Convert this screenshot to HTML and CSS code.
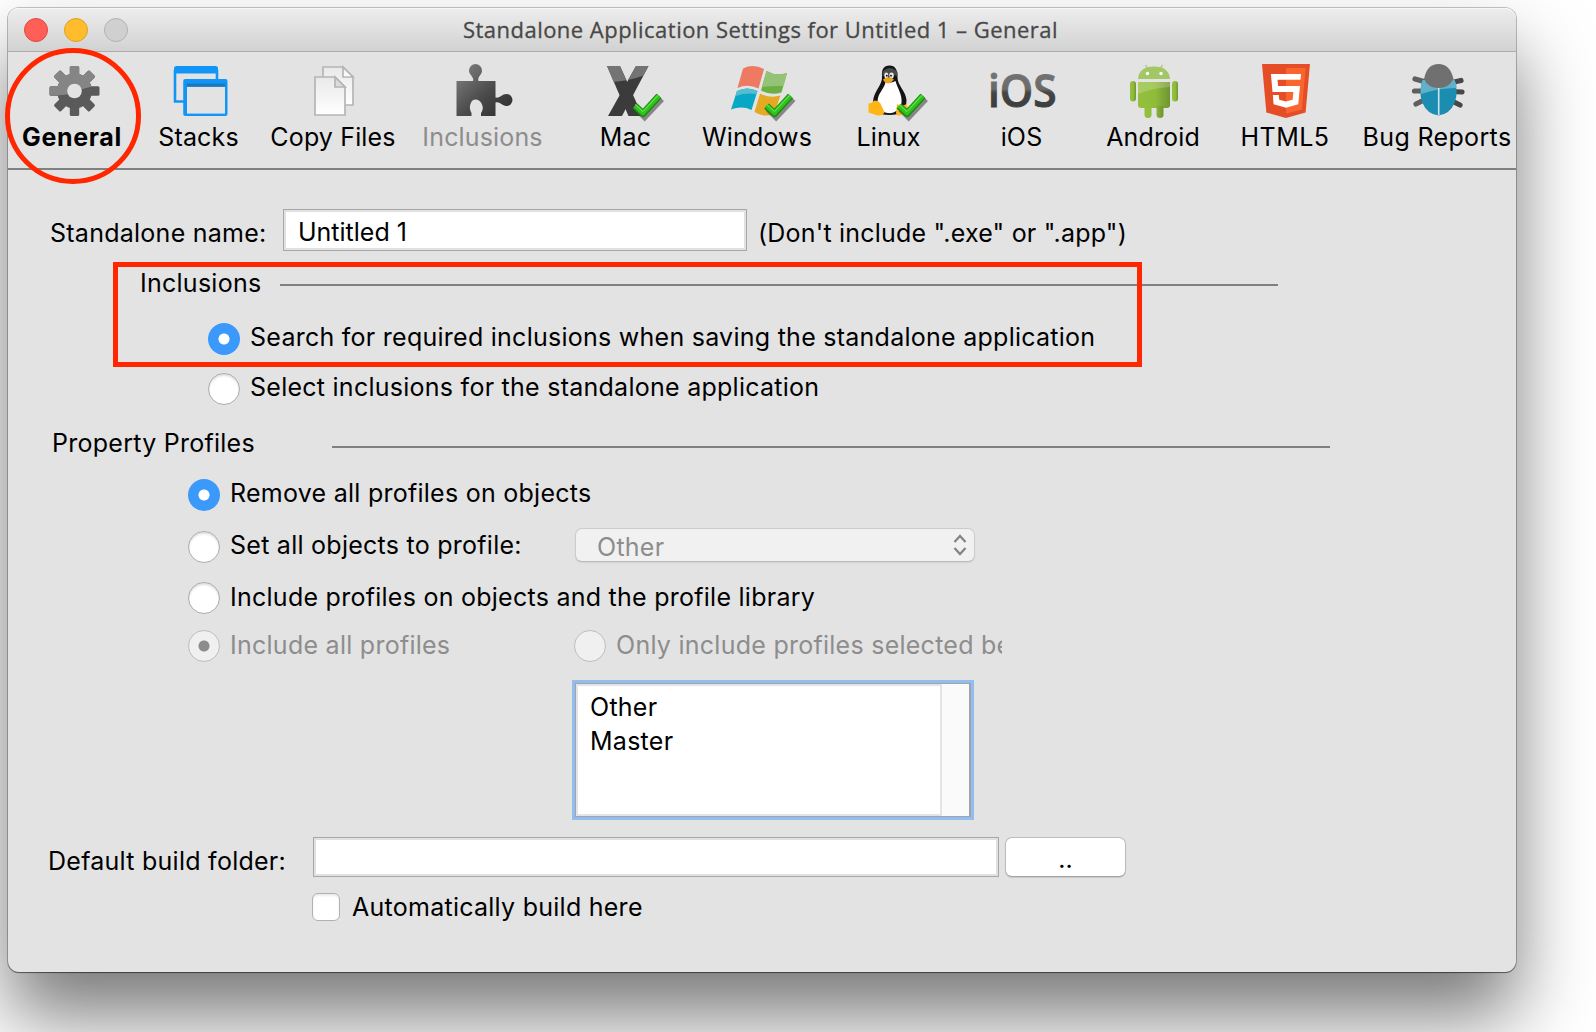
FILE: index.html
```html
<!DOCTYPE html>
<html lang="en">
<head>
<meta charset="utf-8">
<title>Standalone Application Settings</title>
<link rel="stylesheet" href="styles.css">
</head>
<body>
<svg class="defs" width="0" height="0" aria-hidden="true">
  <defs>
    <linearGradient id="puzzle" x1="0" y1="0" x2="1" y2="1"><stop offset="0" stop-color="#858585"/><stop offset=".55" stop-color="#4a4a4a"/><stop offset="1" stop-color="#2c2c2c"/></linearGradient>
    <linearGradient id="split" x1="0" y1="0" x2="0" y2="1"><stop offset="0" stop-color="#7d7d7d"/><stop offset=".5" stop-color="#6a6a6a"/><stop offset=".56" stop-color="#454545"/><stop offset="1" stop-color="#363636"/></linearGradient>
    <linearGradient id="paper" x1="0" y1="0" x2="0" y2="1"><stop offset="0" stop-color="#e9e9e9"/><stop offset="1" stop-color="#ffffff"/></linearGradient>
    <linearGradient id="droid" x1="0" y1="0" x2="1" y2="0"><stop offset="0" stop-color="#94c13c"/><stop offset=".55" stop-color="#8fbb3a"/><stop offset="1" stop-color="#6f9430"/></linearGradient>
    <g id="check">
      <path d="M2 14 L10 22 L27 4" fill="none" stroke="#3a3a3a" stroke-opacity=".55" stroke-width="6.5" transform="translate(1.6 1.8)"/>
      <path d="M2 13 L10 20.5 L26 3" fill="none" stroke="#1c8a10" stroke-width="7" stroke-linejoin="round"/>
      <path d="M2 12.6 L10 20 L26 2.6" fill="none" stroke="#2fc41c" stroke-width="4.6" stroke-linejoin="round"/>
      <path d="M2 11.4 L10 18.6 L25 2.4" fill="none" stroke="#7de36c" stroke-width="1"/>
    </g>
  </defs>
</svg>
<main class="window">
  <header class="titlebar">
    <div class="lights"><i class="light close"></i><i class="light minimise"></i><i class="light zoom"></i></div>
    <h1 class="title">Standalone Application Settings for Untitled 1 – General</h1>
  </header>

  <nav class="toolbar">
    <a class="tool tool-general active">
      <svg viewBox="36 60 72 60"><g fill="#5a5a5a"><circle cx="74.5" cy="91" r="17.5"/><g id="teeth"><rect x="69.8" y="66" width="9.4" height="50" rx="1.5"/><rect x="69.8" y="66" width="9.4" height="50" rx="1.5" transform="rotate(45 74.5 91)"/><rect x="69.8" y="66" width="9.4" height="50" rx="1.5" transform="rotate(90 74.5 91)"/><rect x="69.8" y="66" width="9.4" height="50" rx="1.5" transform="rotate(135 74.5 91)"/></g></g>
      <clipPath id="gear-top"><path d="M48 64H102V86Q90 86 82 89Q66 97 48 95Z"/></clipPath>
      <g clip-path="url(#gear-top)"><g fill="#858585"><circle cx="74.5" cy="91" r="17.5"/><use href="#teeth"/></g></g>
      <circle cx="74.5" cy="91" r="7.3" fill="#e3e3e3"/></svg>
      <span>General</span></a>
    <a class="tool tool-stacks">
      <svg viewBox="163.500 60 72 60"><path d="M175.5 70V101.500H186M217.500 70V80" fill="none" stroke="#1296f5" stroke-width="2.6"/><path d="M174.500 73.500V68.500Q174.500 66 177 66H216Q218.500 66 218.500 68.500V73.500Z" fill="#1296f5"/><rect x="183.700" y="79" width="44.300" height="37" rx="2" fill="#1296f5"/><rect x="187.500" y="86.800" width="38" height="26.800" fill="#e3e3e3"/><rect x="187" y="83.600" width="39" height="3" fill="#1a78bd"/></svg>
      <span>Stacks</span></a>
    <a class="tool tool-copy">
      <svg viewBox="297 60 72 60"><g fill="url(#paper)" stroke="#b5b5b5" stroke-width="1.7"><path d="M323 67H343L353 77V105H323Z"/><path d="M343 67V77H353Z"/><path d="M315 77H335L345 87V115H315Z"/><path d="M335 77V87H345Z" fill="#dcdcdc"/></g></svg>
      <span>Copy Files</span></a>
    <a class="tool tool-inclusions disabled">
      <svg viewBox="446.500 60 72 60"><path fill="url(#puzzle)" d="M456 81H472.500C474 77 468.500 75 468.500 70.500A6.500 6.500 0 0 1 481.500 70.500C481.500 75 476.500 77 478 81H495V97.500C500 98.500 501 94 506 94A6 6 0 0 1 506 106C501 106 500 101.500 495 102.500V116H480.500V113C482 111 483 108 481.500 104.500C479 98 471.500 98 470 104C468.500 108 470 111 471 113V116H456Z"/></svg>
      <span>Inclusions</span></a>
    <a class="tool tool-mac">
      <svg viewBox="589.500 60 72 60"><clipPath id="x-top"><path d="M600 60H655V68Q642 81 600 83Z"/></clipPath><g fill="#3b3b3b"><path id="bar-a" d="M606.500 66H619.500L642 116H628Z"/><path id="bar-b" d="M635.500 66H648L621.500 116H607.500Z"/></g><g clip-path="url(#x-top)" fill="#747474"><use href="#bar-a"/><use href="#bar-b"/></g><use href="#check" x="632.500" y="93"/></svg>
      <span>Mac</span></a>
    <a class="tool tool-windows">
      <svg viewBox="721 60 72 60"><path d="M743 68.500Q753 63.500 764 69L758.500 88.500Q748 83.500 737.500 88Z" fill="#ee7a61"/><path d="M766.500 71Q776 76.500 787 73L781.500 92.500Q771 96 761 90.500Z" fill="#6cb043"/><path d="M766.500 71Q776 76.500 787 73L783.500 86Q772 85.500 762 87Z" fill="#94c377"/><path d="M737 91Q747 86 757.500 91L751.500 110Q742 105.500 731 109.500Z" fill="#08a7c6"/><path d="M737 91Q747 86 757.500 91L756.500 94Q746 92.500 735.500 96Z" fill="#55bdd1"/><path d="M760 93.500Q770 98.500 780.500 95.500L774 114Q764 118 754.500 112Z" fill="#e5a923"/><use href="#check" x="764.500" y="93"/></svg>
      <span>Windows</span></a>
    <a class="tool tool-linux">
      <svg viewBox="852.500 60 72 60"><path d="M889 65.500C883 65.500 881 70 881.500 76C882.500 85 873 91 872.500 102C872 112 880 115 889 115C900 115 906 111 906 100C905 90 897 86 897 77C897 70 895 65.500 889 65.500Z" fill="#141414"/><path d="M882 72Q889 64 897 72L897 76Q889 73 882 76Z" fill="#4a4a4a"/><path d="M885 82Q890 84 895 81C897 89 902 94 901 103C900 110 893 114 887 113C878 112 876 105 877.500 98C879 92 884 88 885 82Z" fill="#fff"/><ellipse cx="885.800" cy="75.500" rx="2" ry="3" fill="#e7e7e7"/><ellipse cx="891" cy="75.500" rx="2.300" ry="3" fill="#e7e7e7"/><circle cx="886.300" cy="75.700" r=".9"/><circle cx="890.500" cy="75.700" r=".9"/><path d="M882.500 79.500Q888 75 893.500 79.500Q890 83.500 887.500 83.500Q884 83 882.500 79.500Z" fill="#e9a520"/><path d="M868 103.500Q872 103 874 100.500Q880 101 881 106L884 112Q883 116 877 115.500L868 112.500Z" fill="#ffb515"/><path d="M896.500 104Q901 107 906 104L908 109L900 115.500Q896 116 895.500 113Z" fill="#ffb515"/><use href="#check" x="896.500" y="93"/></svg>
      <span>Linux</span></a>
    <a class="tool tool-ios">
      <svg viewBox="985.500 60 72 60"><text class="ios-mark" x="987.500" y="107" textLength="68.500" lengthAdjust="spacingAndGlyphs">iOS</text></svg>
      <span>iOS</span></a>
    <a class="tool tool-android">
      <svg viewBox="1117 60 72 60"><g fill="url(#droid)"><path d="M1138 79Q1139 66.500 1154 66.500Q1169 66.500 1170 79Z" fill="#a2c866"/><path d="M1145.500 65L1148 69M1162.500 65L1160 69" stroke="#a2c866" stroke-width="1.300"/><path d="M1138 82H1170V105Q1170 108 1167 108H1141Q1138 108 1138 105Z"/><rect x="1130" y="81" width="6" height="20.500" rx="3"/><rect x="1172" y="81" width="6" height="20.500" rx="3"/><path d="M1144.500 106H1151.500V115Q1151.500 118 1148 118Q1144.500 118 1144.500 115ZM1156.500 106H1163.500V115Q1163.500 118 1160 118Q1156.500 118 1156.500 115Z"/></g><path d="M1138 82H1170V87Q1152 88 1138 94Z" fill="#fff" opacity=".2"/><circle cx="1147.500" cy="73.500" r="1.700" fill="#fff"/><circle cx="1161" cy="73.500" r="1.700" fill="#fff"/></svg>
      <span>Android</span></a>
    <a class="tool tool-html">
      <svg viewBox="1249 60 72 60"><g transform="translate(1258.800 64) scale(.1064 .1055)"><path d="M71 460L30 0H481L440 460L255 512Z" fill="#e54d26"/><path d="M256 472L405 431L440 37H256Z" fill="#f9652f"/><path d="M114 94H256V150H176L181 208H256V265H129ZM132 293H188L192 338L256 355V414L139 382Z" fill="#fff"/><path d="M255 94H397L392 150H255ZM255 208H387L371 382L255 414V355L318 338L325 265H255Z" fill="#fff"/></g></svg>
      <span>HTML5</span></a>
    <a class="tool tool-bug">
      <svg viewBox="1401 60 72 60"><path d="M1415 79L1424 81.500M1414.500 91H1424M1416 104L1424 100" stroke="#5f5f5f" stroke-width="5.200" stroke-linecap="round"/><path d="M1461 80.500L1452 82.500M1462 92L1452 91.500M1460 105L1452 101" stroke="#484848" stroke-width="5.200" stroke-linecap="round"/><path d="M1423 80Q1437 86 1454 80Q1459 92 1454.500 103Q1450 114 1438.500 115.500Q1427 114 1422.500 103Q1418 92 1423 80Z" fill="#1b8db0"/><path d="M1422.500 80H1454.500Q1457 85 1456.500 88Q1438 88 1421 94Q1420 86 1422.500 80Z" fill="#62b1cb"/><path d="M1424 79Q1427 64 1438.500 64Q1450 64 1453.500 79Q1449 88 1438.500 88Q1428 88 1424 79Z" fill="#707070"/><path d="M1438.700 88V115" stroke="#cfe4ea" stroke-width="1.600"/></svg>
      <span>Bug Reports</span></a>
  </nav>

  <section class="panel">
    <div class="row row-name">
      <label class="text" for="name">Standalone name:</label>
      <div class="field field-name" id="name">Untitled 1</div>
      <span class="text hint">(Don't include ".exe" or ".app")</span>
    </div>
    <div class="heading heading-inclusions"><span class="text">Inclusions</span><i class="rule"></i></div>
    <div class="row option search"><i class="radio on"></i><span class="text">Search for required inclusions when saving the standalone application</span></div>
    <div class="row option select-own"><i class="radio"></i><span class="text">Select inclusions for the standalone application</span></div>
    <div class="heading heading-profiles"><span class="text">Property Profiles</span><i class="rule"></i></div>
    <div class="profiles">
      <div class="row option remove"><i class="radio on"></i><span class="text">Remove all profiles on objects</span></div>
      <div class="row option set-all"><i class="radio"></i><span class="text set-label">Set all objects to profile:</span>
        <div class="select"><span>Other</span><svg viewBox="0 0 14 22"><path d="M1.500 8L7 2L12.500 8M1.500 14L7 20L12.500 14"/></svg></div></div>
      <div class="row option include"><i class="radio"></i><span class="text">Include profiles on objects and the profile library</span></div>
      <div class="row option subset disabled"><i class="radio dim on"></i><span class="text all-label">Include all profiles</span><i class="radio dim"></i><span class="text clipped">Only include profiles selected below</span></div>
      <div class="listbox"><ul class="list"><li>Other</li><li>Master</li></ul><i class="scroller"></i></div>
    </div>
    <div class="row row-folder">
      <label class="text">Default build folder:</label>
      <div class="field field-folder"></div>
      <button class="button">..</button>
    </div>
    <div class="row row-auto"><i class="checkbox"></i><span class="text">Automatically build here</span></div>
  </section>
</main>
<i class="mark mark-circle"></i>
<i class="mark mark-box"></i>
</body>
</html>
```
FILE: styles.css
```css
* { box-sizing: border-box; }
body {
  margin: 0;
  width: 1596px;
  height: 1032px;
  padding: 8px;
  overflow: hidden;
  position: relative;
  background: #fff;
  color: #000;
  font: 25px/30px Inter, "Liberation Sans", sans-serif;
  letter-spacing: 0.15px;
}
i { display: block; flex: none; }
svg { display: block; flex: none; overflow: visible; }
.defs { position: absolute; }

.window {
  width: 1508px;
  height: 964px;
  border-radius: 11px;
  background: #e3e3e3;
  box-shadow: 0 0 0 1px rgba(0, 0, 0, .22), 0 1px 1px rgba(0, 0, 0, .4), 0 44px 76px rgba(0, 0, 0, .53);
}

.titlebar {
  height: 44px;
  display: flex;
  align-items: center;
  padding-left: 16px;
  border-radius: 11px 11px 0 0;
  border-bottom: 1px solid #adadad;
  background: linear-gradient(#ededed, #d2d2d2);
  box-shadow: inset 0 1px #f6f6f6;
}
.lights { display: flex; gap: 16px; }
.light { width: 24px; height: 24px; border-radius: 50%; border: 1px solid; }
.close { background: #ff5f57; border-color: #e2463f; }
.minimise { background: #ffbd2e; border-color: #dfa023; }
.zoom { background: #d0d0d0; border-color: #b2b2b2; }
.title {
  margin: -2px 0 0 335px;
  font: 22px/30px "Open Sans", "Noto Sans", sans-serif;
  letter-spacing: 0.47px;
  color: #484848;
  -webkit-text-stroke: 0.3px #484848;
  white-space: nowrap;
}

.toolbar {
  height: 118px;
  display: flex;
  border-bottom: 2px solid #808080;
}
.tool {
  flex: none;
  height: 100px;
  padding-top: 8px;
  display: flex;
  flex-direction: column;
  align-items: center;
  white-space: nowrap;
}
.tool svg { width: 72px; height: 60px; margin-bottom: 2px; }
.tool-general { width: 128px; }
.tool-stacks { width: 125px; }
.tool-copy { width: 144px; }
.tool-inclusions { width: 155px; }
.tool-mac { width: 131px; }
.tool-windows { width: 132px; }
.tool-linux { width: 131px; }
.tool-ios { width: 135px; }
.tool-android { width: 128px; }
.tool-html { width: 136px; letter-spacing: 0.5px; }
.tool-bug { width: 168px; letter-spacing: 0.35px; }
.active { font-weight: 700; letter-spacing: 0.65px; }
.disabled { color: #8d8d8d; }
.ios-mark { font: 600 46px "Open Sans", sans-serif; letter-spacing: 0; fill: url(#split); stroke: url(#split); stroke-width: 1px; }

.panel { padding-top: 39px; letter-spacing: 0.26px; }
.row { display: flex; align-items: flex-start; }
.text { display: block; white-space: nowrap; margin-top: 9px; }
.field {
  border: 1px solid #a8a8a8;
  background: #fff;
  box-shadow: inset 0 0 0 2px #e1e1e1;
}
.row-name { height: 42px; padding-left: 42px; }
.field-name { width: 464px; height: 42px; padding: 7px 14px; letter-spacing: 0; }
.row-name label { width: 233px; }
.row-name .hint { margin-left: 11px; letter-spacing: 0.2px; }

.heading { display: flex; height: 30px; }
.heading .text { margin-top: 0; }
.rule { width: 998px; height: 2px; background: #808080; }
.heading-inclusions { margin: 17px 0 0 132px; }
.heading-inclusions .text { width: 140px; }
.heading-inclusions .rule { margin-top: 16px; }
.heading-profiles { margin: 23px 0 0 44px; }
.heading-profiles .text { width: 280px; }
.heading-profiles .rule { margin-top: 18px; }

.option { height: 32px; }
.option .text { margin-top: -1px; margin-left: 10px; }
.search, .select-own { padding-left: 200px; }
.search { margin-top: 25px; }
.select-own { margin-top: 18px; }
.radio {
  width: 32px;
  height: 32px;
  border-radius: 50%;
  border: 1px solid #ababab;
  background: #fff;
  box-shadow: inset 0 2px 2px rgba(0, 0, 0, .12);
}
.radio.on {
  border: 0;
  background: radial-gradient(circle, #fff 5px, #3b99fc 6px);
  box-shadow: none;
}
.radio.dim { border: 1px solid #bebebe; background: #f0f0f0; box-shadow: none; }
.radio.dim.on { background: radial-gradient(circle, #8c8c8c 5px, #f0f0f0 6px); }

.profiles { padding-left: 180px; }
.remove { margin-top: 21px; }
.set-all { margin-top: 20px; }
.include { margin-top: 19px; }
.subset { margin-top: 16px; }
.include .text, .subset .text { margin-top: 0; }
.option .set-label { width: 345px; }
.select {
  width: 400px;
  height: 34px;
  margin-top: -3px;
  padding: 3px 7px 0 21px;
  display: flex;
  justify-content: space-between;
  border: 1px solid #cbcbcb;
  border-bottom-color: #bdbdbd;
  border-radius: 7px;
  background: #f1f1f1;
  box-shadow: 0 1px 1px rgba(0, 0, 0, .08);
  color: #8d8d8d;
}
.select svg { width: 14px; height: 22px; margin-top: 2px; fill: none; stroke: #868686; stroke-width: 2.4; }
.option .all-label { width: 344px; }
.option .clipped { width: 386px; overflow: hidden; }
.listbox {
  width: 396px;
  height: 134px;
  margin: 21px 0 0 387px;
  display: flex;
  justify-content: space-between;
  border: 1px solid #a3a3a3;
  border-right-width: 2px;
  background: #fff;
  box-shadow: 0 0 0 3px #92bdf0;
}
.list {
  width: 366px;
  margin: 0;
  padding: 4px 0 0 12px;
  border: 2px solid #e4e4e4;
  list-style: none;
  line-height: 34px;
}
.scroller { width: 27px; background: #fafafa; }

.row-folder { margin-top: 20px; height: 40px; padding-left: 40px; }
.row-folder label { width: 265px; }
.field-folder { width: 686px; height: 40px; }
.button {
  width: 121px;
  height: 40px;
  margin-left: 6px;
  padding: 4px 0 0;
  border: 1px solid #bcbcbc;
  border-bottom-color: #a4a4a4;
  border-radius: 7px;
  background: #fff;
  box-shadow: 0 1px 1px rgba(0, 0, 0, .12);
  color: #000;
  font: inherit;
}
.row-auto { margin-top: 16px; padding-left: 304px; }
.row-auto .text { margin: -1px 0 0 12px; }
.checkbox {
  width: 28px;
  height: 28px;
  border: 1px solid #b0b0b0;
  border-radius: 6px;
  background: #fff;
  box-shadow: inset 0 2px 2px rgba(0, 0, 0, .08);
}

.mark { position: absolute; border: 5px solid #ff2600; }
.mark-circle { left: 5px; top: 48px; width: 136px; height: 136px; border-radius: 50%; }
.mark-box { left: 113px; top: 262px; width: 1029px; height: 105px; }
```
